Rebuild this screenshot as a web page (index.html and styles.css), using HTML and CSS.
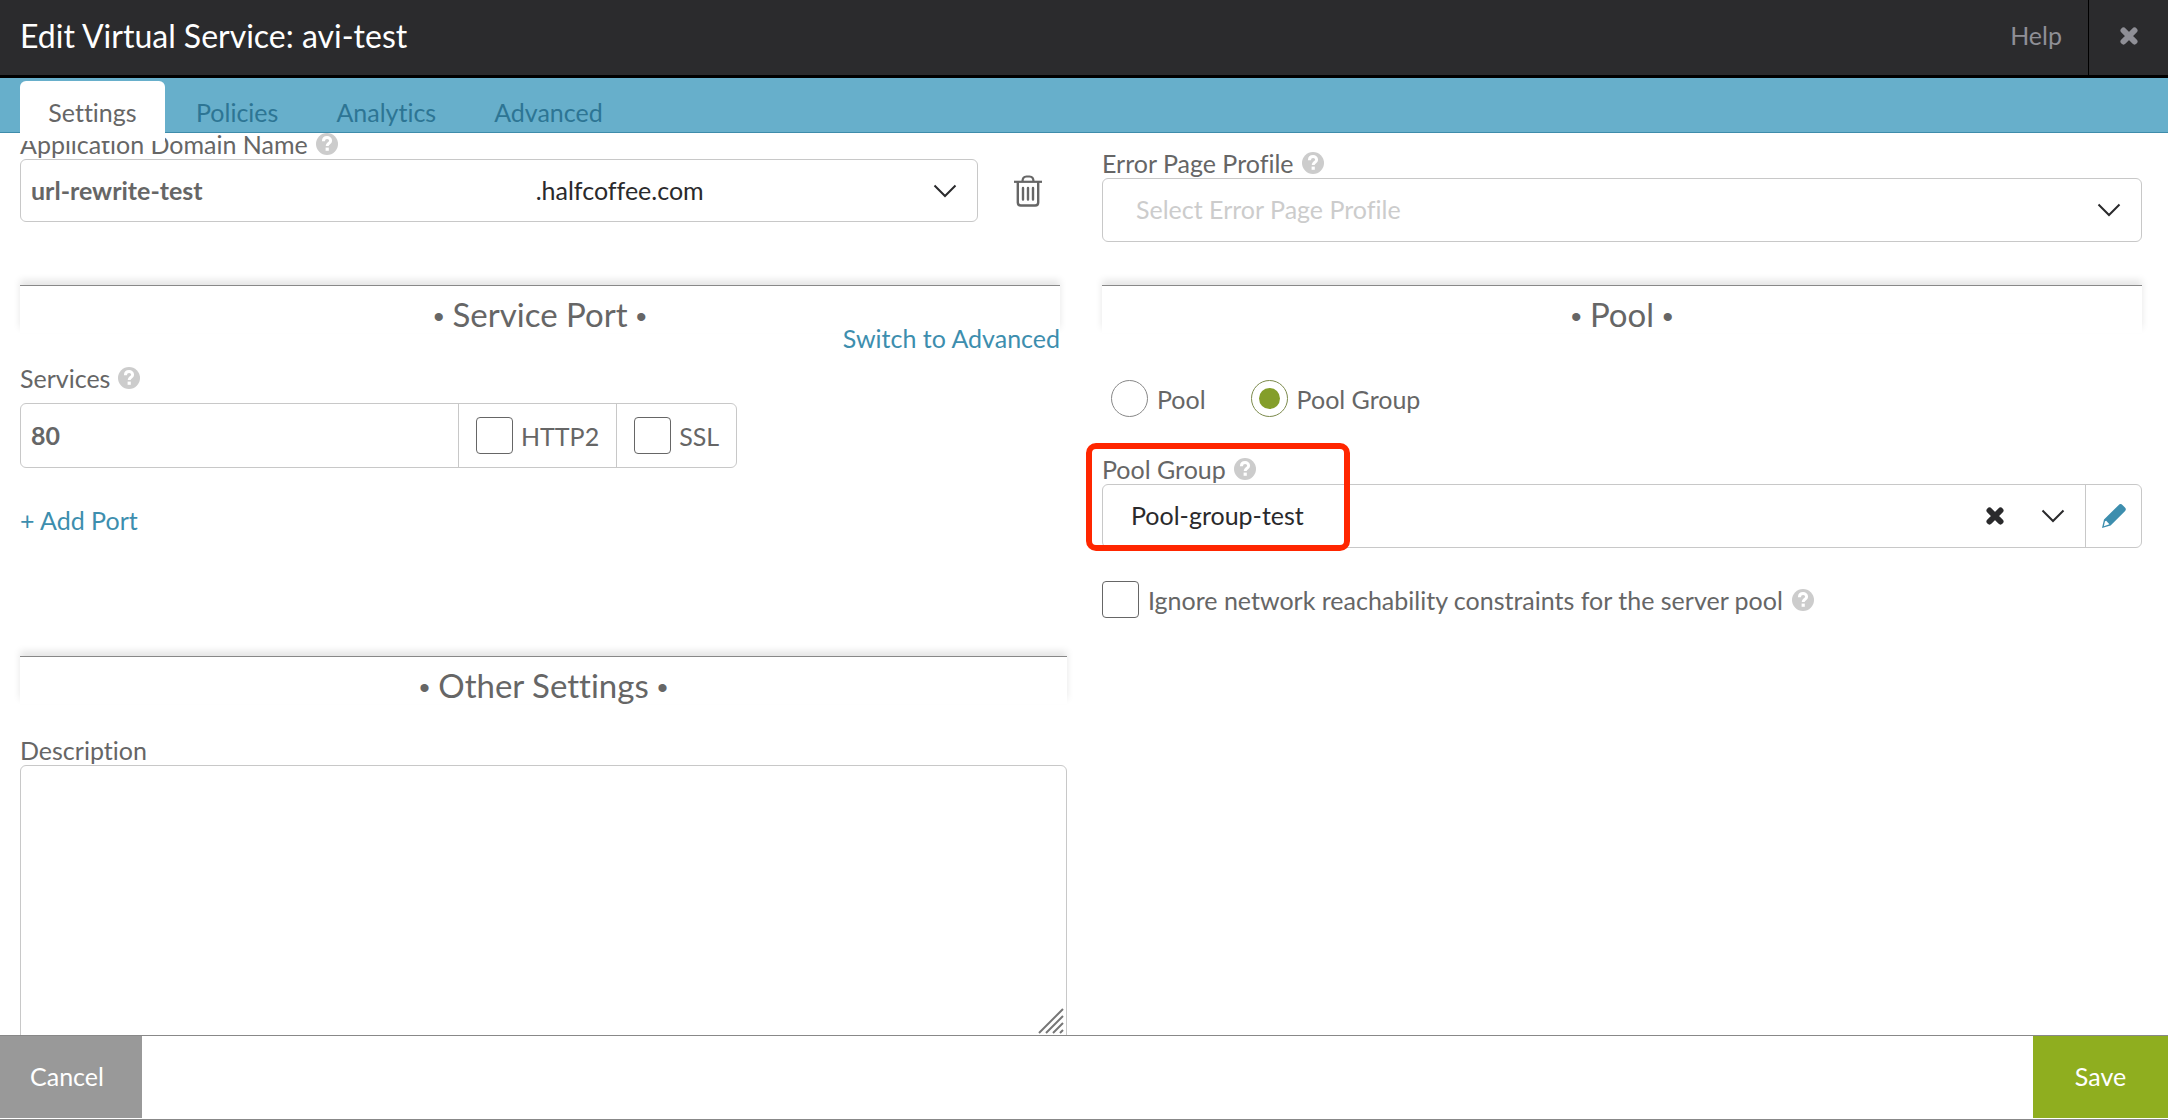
FILE: index.html
```html
<!DOCTYPE html>
<html lang="en">
<head>
<meta charset="utf-8">
<title>Edit Virtual Service: avi-test</title>
<link rel="stylesheet" href="styles.css">
</head>
<body>
<svg class="sprite" aria-hidden="true">
  <symbol id="chevron" viewBox="0 0 24 14"><path d="M1.500 1.500 12 12 22.500 1.500" fill="none" stroke="currentColor" stroke-width="2"/></symbol>
  <symbol id="cross" viewBox="0 0 18 18"><path d="M3.500 3.500 14.500 14.500M14.500 3.500 3.500 14.500" fill="none" stroke="currentColor" stroke-width="6" stroke-linecap="round"/></symbol>
  <symbol id="help" viewBox="0 0 22 22"><circle cx="11" cy="11" r="11" fill="#ccc"/><path d="M7.400 8.200C7.600 3.400 14.600 3.600 14.600 7.700C14.600 10.400 11.200 10.200 11.200 13.100" fill="none" stroke="#fff" stroke-width="3"/><path d="M9.600 14.600h3.200v3.200H9.600z" fill="#fff"/></symbol>
</svg>

<header class="topbar">
  <h1 class="topbar-title">Edit Virtual Service: avi-test</h1>
  <a class="topbar-help" href="#help">Help</a>
  <button class="topbar-close" type="button" aria-label="Close"><svg class="icon-cross"><use href="#cross"/></svg></button>
</header>

<nav class="tabs">
  <a class="tab tab-active" href="#settings">Settings</a>
  <a class="tab" href="#policies">Policies</a>
  <a class="tab" href="#analytics">Analytics</a>
  <a class="tab" href="#advanced">Advanced</a>
</nav>

<main class="content">
  <div class="row row-top">
    <div>
      <div class="label"><label for="domain">Application Domain Name</label><svg class="icon-help"><use href="#help"/></svg></div>
      <div class="domain">
        <div class="box domain-box">
          <input class="text-input domain-input" id="domain" type="text" value="url-rewrite-test">
          <div class="select-wrap domain-select">
            <select class="select select-flush" aria-label="Domain"><option>.halfcoffee.com</option></select>
            <svg class="icon-chevron"><use href="#chevron"/></svg>
          </div>
        </div>
        <button class="trash" type="button" aria-label="Delete domain">
          <svg class="icon-trash" viewBox="0 0 28 32" fill="none" stroke="currentColor"><path d="M0 6.800h28" stroke-width="2.200"/><path d="M8.500 6.500q0-5 4-5h3q4 0 4 5" stroke-width="2.200"/><path d="M3.800 7v20.500q0 3 3 3h14.400q3 0 3-3V7" stroke-width="2.400"/><path d="M9 13v11.500M14 13v11.500M19 13v11.500" stroke-width="2.400" stroke-linecap="round"/></svg>
        </button>
      </div>
    </div>
    <div class="error-profile">
      <div class="label"><label for="error-profile">Error Page Profile</label><svg class="icon-help"><use href="#help"/></svg></div>
      <div class="box select-wrap">
        <select class="select select-empty" id="error-profile"><option>Select Error Page Profile</option></select>
        <svg class="icon-chevron"><use href="#chevron"/></svg>
      </div>
    </div>
  </div>

  <div class="row row-main">
    <section>
      <h2 class="section-title"><span class="bullet">•</span> Service Port <span class="bullet">•</span></h2>
      <div class="switch"><a class="link" href="#switch">Switch to Advanced</a></div>
      <div class="label"><label for="port">Services</label><svg class="icon-help"><use href="#help"/></svg></div>
      <div class="box services">
        <input class="text-input port-input" id="port" type="text" value="80">
        <label class="service-option"><input class="check" type="checkbox">HTTP2</label>
        <label class="service-option"><input class="check" type="checkbox">SSL</label>
      </div>
      <button class="link add-port" type="button">+ Add Port</button>
    </section>
    <section>
      <h2 class="section-title"><span class="bullet">•</span> Pool <span class="bullet">•</span></h2>
      <div class="radios">
        <label class="choice"><input class="radio" type="radio" name="pool">Pool</label>
        <label class="choice"><input class="radio" type="radio" name="pool" checked>Pool Group</label>
      </div>
      <div class="pool-group">
        <div class="label"><label for="pool-group">Pool Group</label><svg class="icon-help"><use href="#help"/></svg></div>
        <div class="box pool-box">
          <div class="select-wrap pool-select">
            <select class="select" id="pool-group"><option>Pool-group-test</option></select>
            <button class="clear" type="button" aria-label="Clear"><svg class="icon-cross"><use href="#cross"/></svg></button>
            <svg class="icon-chevron"><use href="#chevron"/></svg>
          </div>
          <button class="edit" type="button" aria-label="Edit pool group">
            <svg class="icon-pencil" viewBox="0 0 24 24"><path d="M16.500 1.200q2-2.200 4.200 0l2 2q2.200 2 .2 4L8.600 21.400 0 24 2 15.400z" fill="currentColor"/><path d="M1.800 22.300 3 17.200 4.200 16.800 7.400 20.200z" fill="#fff"/></svg>
          </button>
        </div>
        <div class="highlight"></div>
      </div>
      <div class="choice ignore"><input class="check" type="checkbox" id="ignore"><label for="ignore">Ignore network reachability constraints for the server pool</label><svg class="icon-help"><use href="#help"/></svg></div>
    </section>
  </div>

  <div class="row row-other">
    <section>
      <h2 class="section-title"><span class="bullet">•</span> Other Settings <span class="bullet">•</span></h2>
      <div class="label label-description"><label for="description">Description</label></div>
      <div class="description">
        <textarea class="box textarea" id="description"></textarea>
        <svg class="icon-grip" viewBox="0 0 26 26"><path d="M1 25 25 1M8 25 25 8M15 25 25 15M22 25 25 22" stroke="#777" stroke-width="2"/></svg>
      </div>
    </section>
  </div>
</main>

<footer class="footer">
  <button class="footer-button footer-cancel" type="button">Cancel</button>
  <button class="footer-button footer-save" type="button">Save</button>
</footer>
</body>
</html>
```
FILE: styles.css
```css
* { box-sizing: border-box; }

body {
  margin: 0;
  height: 100vh;
  display: flex;
  flex-direction: column;
  background: #fff;
  color: #666;
  font: 25px/32px Lato, sans-serif;
  font-variant-ligatures: none;
}

button, input, select, textarea {
  font: inherit;
  font-variant-ligatures: none;
  color: inherit;
  margin: 0;
  padding: 0;
  border: 0;
  background: none;
}

svg { display: block; flex: none; }
.sprite { position: absolute; width: 0; height: 0; }
.icon-chevron { width: 24px; height: 14px; color: #2a2a2c; pointer-events: none; }
.icon-cross { width: 18px; height: 18px; }
.icon-help { width: 22px; height: 22px; }
.icon-trash { width: 28px; height: 32px; }
.icon-pencil { width: 24px; height: 24px; }

.topbar {
  flex: none;
  display: flex;
  height: 78px;
  border-bottom: 3px solid #000;
  background: #2b2b2d;
  color: #8f8f96;
}
.topbar-title {
  flex: 1;
  margin: 0;
  padding: 16px 20px;
  color: #fff;
  font-size: 32px;
  font-weight: 400;
  line-height: 40px;
}
.topbar-help { padding: 19px 26px; color: inherit; text-decoration: none; }
.topbar-close {
  width: 80px;
  padding-bottom: 3px;
  border-left: 1px solid #000;
  display: grid;
  place-items: center;
}

.tabs {
  flex: none;
  position: relative;
  z-index: 1;
  display: flex;
  height: 55px;
  padding: 3px 20px 0;
  border-bottom: 1px solid #3e8cab;
  background: #67afcb;
}
.tab {
  height: 60px;
  padding: 15px 27px 0 31px;
  color: #2d7594;
  text-decoration: none;
}
.tab-active {
  min-width: 145px;
  padding: 15px 27px 0;
  border-radius: 6px 6px 0 0;
  background: #fff;
  color: #666;
  text-align: center;
}

.content { flex: 1; min-height: 0; overflow: hidden; padding: 0 26px 0 20px; }
.row { display: grid; grid-template-columns: 1fr 1fr; column-gap: 42px; }
.row-top { margin-top: -6px; min-height: 158px; }
.row-main { min-height: 371px; }
.row-other { column-gap: 28px; }

.label {
  display: flex;
  align-items: center;
  gap: 8px;
  padding-top: 2px;
  line-height: 30px;
  white-space: nowrap;
}
.box { border: 1px solid #c8c8c8; border-radius: 6px; background: #fff; }

.text-input { padding: 0 0 2px 10px; font-weight: 700; min-width: 0; }
.select-wrap { position: relative; display: flex; align-items: center; height: 64px; }
.select { appearance: none; width: 100%; height: 100%; padding: 0 0 2px 33px; color: #2a2a2c; }
.select-empty { color: #ccc; }
.select-flush { padding-left: 0; }
.select-wrap .icon-chevron { position: absolute; right: 20px; }

.domain { display: flex; align-items: center; }
.domain-box { flex: 1; display: flex; height: 63px; }
.domain-input { flex: 510; }
.domain-select { flex: 446; height: auto; }
.trash { width: 82px; padding-left: 36px; }
.error-profile { padding-top: 19px; }

.section-title {
  margin: 0;
  padding-top: 9px;
  border-top: 1px solid #888;
  box-shadow: 0 -5px 7px rgba(0, 0, 0, .1);
  font-size: 33px;
  font-weight: 400;
  line-height: 38px;
  text-align: center;
}
.bullet { font: 30px/1 "Liberation Sans", sans-serif; }

.link { color: #3d8eae; text-decoration: none; }
.switch { display: flex; justify-content: flex-end; margin: -11px 0 7px; }
.services { display: flex; width: fit-content; height: 65px; margin-top: 10px; }
.port-input { width: 437px; }
.service-option {
  display: flex;
  align-items: center;
  gap: 8px;
  padding: 0 17px;
  border-left: 1px solid #c8c8c8;
}
.add-port { display: block; margin-top: 36px; }

.check, .radio { appearance: none; flex: none; width: 37px; height: 37px; border: 1px solid #666; background: #fff; }
.check { border-radius: 4px; }
.radio { border-color: #888; border-radius: 50%; display: grid; place-items: center; }
.radio:checked { border-color: #7c8a4c; }
.radio:checked::before { content: ""; width: 21px; height: 21px; border-radius: 50%; background: #849e2a; }

.choice { display: flex; align-items: center; gap: 9px; white-space: nowrap; }
.radios { display: flex; gap: 45px; padding: 47px 0 0 9px; }
.pool-group { position: relative; margin-top: 35px; }
.pool-box { display: flex; height: 64px; }
.pool-select { flex: 1; height: 100%; }
.pool-select .select { padding-left: 28px; }
.clear { position: absolute; right: 81px; color: #2a2a2c; }
.edit { width: 56px; border-left: 1px solid #c8c8c8; color: #3d8eae; display: grid; place-items: center; }
.highlight {
  position: absolute;
  inset: -9px auto -3px -16px;
  width: 264px;
  border: 6px solid #ff2600;
  border-radius: 10px;
  pointer-events: none;
}
.ignore { margin-top: 33px; }

.label-description { margin-top: 29px; }
.description { position: relative; }
.textarea { display: block; width: 100%; height: 290px; resize: none; padding: 10px; }
.icon-grip { position: absolute; right: 3px; top: 243px; width: 26px; height: 26px; }

.footer {
  flex: none;
  display: flex;
  justify-content: space-between;
  height: 85px;
  padding-bottom: 1px;
  border: solid #888;
  border-width: 1px 0;
}
.footer-button { padding-bottom: 2px; color: #fff; }
.footer-cancel { width: 142px; padding-left: 30px; background: #999; text-align: left; }
.footer-save { width: 135px; background: #8fae1f; }
```
